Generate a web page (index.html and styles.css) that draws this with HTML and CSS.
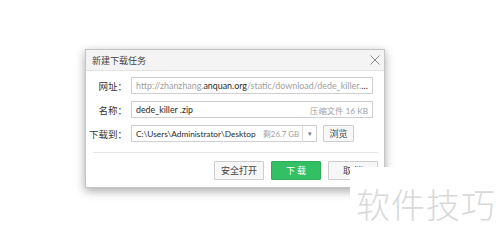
FILE: index.html
```html
<!DOCTYPE html>
<html lang="zh">
<head>
<meta charset="utf-8">
<link rel="stylesheet" href="styles.css">
</head>
<body>
<div class="dialog">
  <div class="titlebar">
    <span class="title">新建下载任务</span>
    <svg class="close" width="10" height="10" viewBox="0 0 10 10"><path d="M0.5 0.5L9.5 9.5M9.5 0.5L0.5 9.5" stroke="#8a8a8a" stroke-width="1" fill="none"/></svg>
  </div>
  <div class="body">
    <div class="row">
      <span class="label">网址：</span>
      <div class="field url"><span class="ell"><span class="muted">http://zhanzhang.</span>anquan.org<span class="muted">/static/download/dede_killer.zip</span></span></div>
    </div>
    <div class="row">
      <span class="label">名称：</span>
      <div class="field"><span class="grow">dede_killer .zip</span><span class="muted">压缩文件 16 KB</span></div>
    </div>
    <div class="row">
      <span class="label">下载到：</span>
      <div class="field path"><span class="grow">C:\Users\Administrator\Desktop</span><span class="muted">剩26.7 GB</span><span class="drop">▾</span></div>
      <button class="btn small">浏览</button>
    </div>
    <div class="sep"></div>
    <div class="actions">
      <button class="btn">安全打开</button>
      <button class="btn primary">下 载</button>
      <button class="btn">取 消</button>
    </div>
  </div>
</div>
<div class="watermark">软件技巧</div>
</body>
</html>
```
FILE: styles.css
```css
html, body {
  margin: 0;
  padding: 0;
  background: #ffffff;
  width: 500px;
  height: 242px;
  overflow: hidden;
  font-family: "Noto Sans CJK SC", "Noto Sans", sans-serif;
}
body {
  padding: 49px 0 0 85px;
  box-sizing: border-box;
}
.dialog {
  width: 300px;
  height: 139px;
  box-sizing: border-box;
  border: 1px solid #c4c4c4;
  background: #ffffff;
  box-shadow: 0 3px 9px rgba(0,0,0,0.35);
  display: flex;
  flex-direction: column;
}
.titlebar {
  height: 20px;
  background: #f4f4f4;
  border-bottom: 1px solid #e2e2e2;
  display: flex;
  align-items: center;
  justify-content: space-between;
  padding: 0 4px 0 6px;
}
.title {
  font-size: 9px;
  color: #444;
}
.close { display: block; }
.body {
  padding: 6px 11px 0 0;
  display: flex;
  flex-direction: column;
  gap: 7px;
}
.row {
  display: flex;
  align-items: center;
  height: 17px;
}
.label {
  width: 41px;
  text-align: right;
  font-size: 9.5px;
  color: #333;
  margin-right: 4px;
  flex: none;
}
.field {
  flex: 1;
  height: 17px;
  box-sizing: border-box;
  border: 1px solid #cfcfcf;
  display: flex;
  align-items: center;
  padding: 0 4px;
  font-family: Lato, "Noto Sans CJK SC", sans-serif;
  font-size: 8.8px;
  color: #2a2a2a;
  white-space: nowrap;
  overflow: hidden;
  min-width: 0;
}
.field .ell {
  overflow: hidden;
  text-overflow: ellipsis;
  min-width: 0;
}
.url { font-size: 8.9px; }
.muted { color: #a0a0a0; font-size: 8.3px; flex: none; }
.url .muted { font-size: 8.9px; }
.grow { flex: 1; min-width: 0; overflow: hidden; }
.path {
  flex: none;
  width: 186px;
  padding-right: 0;
  font-size: 8.3px;
}
.path .muted { margin-left: 3px; font-size: 7.8px; }
.drop {
  flex: none;
  width: 13px;
  height: 15px;
  margin-left: 3px;
  border-left: 1px solid #dcdcdc;
  display: flex;
  align-items: center;
  justify-content: center;
  font-size: 7px;
  color: #777;
}
.btn {
  font-family: inherit;
  width: 50px;
  height: 19px;
  box-sizing: border-box;
  border: 1px solid #cdcdcd;
  background: #f7f7f7;
  font-size: 9px;
  color: #444;
  padding: 0;
  border-radius: 1px;
}
.btn.small {
  width: 31px;
  height: 17px;
  margin-left: 6px;
}
.btn.primary {
  background: #33bf63;
  border-color: #2cae58;
  color: #ffffff;
}
.sep {
  height: 1px;
  background: #e6e6e6;
  margin: 3px 0 0 7px;
  width: 285px;
}
.actions {
  display: flex;
  justify-content: flex-end;
  gap: 7px;
  margin-top: 1px;
  margin-right: -5px;
}
.watermark {
  position: absolute;
  left: 350px;
  top: 167px;
  width: 150px;
  height: 75px;
  background: #ffffff;
  color: #d9d9d9;
  font-size: 34px;
  font-weight: 300;
  line-height: 1;
  padding: 20px 0 0 6px;
  box-sizing: border-box;
  letter-spacing: 1px;
  white-space: nowrap;
}
```
